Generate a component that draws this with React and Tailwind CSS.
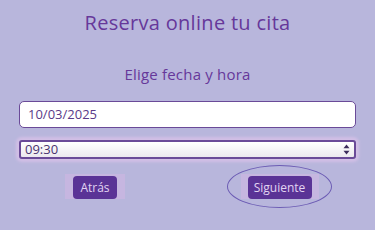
import React from 'react';

export default function App() {
  return (
    <div className="min-h-screen bg-[#b8b6dc] px-[19px] pt-[9px] font-['Open_Sans',sans-serif]">
      <h1 className="text-center text-[20px] leading-[28px] text-[#66389a] tracking-[0.3px]">
        Reserva online tu cita
      </h1>
      <h2 className="mt-[27px] text-center text-[15px] leading-[20px] text-[#66389a] tracking-[0.2px]">
        Elige fecha y hora
      </h2>

      {/* fecha */}
      <div className="mt-[17px] h-[27px] flex items-center rounded-[5px] border-[1.5px] border-[#6a4a98] bg-white px-[8px] text-[13px] text-[#5a3a88]">
        10/03/2025
      </div>

      {/* hora */}
      <div className="mt-[12px] h-[19px] flex items-center justify-between rounded-[3px] border-2 border-[#6a4a98] bg-gradient-to-b from-white to-[#ebe8ee] pl-[4px] pr-[4px] text-[13px] text-[#4a3470] shadow-[0_0_3px_3px_#d2bfe6]">
        <span className="leading-none">09:30</span>
        <svg width="7" height="11" viewBox="0 0 7 11">
          <path d="M3.5 0.5 L6.5 4.3 L0.5 4.3 Z" fill="#3c2c5c" />
          <path d="M3.5 10.5 L6.5 6.7 L0.5 6.7 Z" fill="#3c2c5c" />
        </svg>
      </div>

      {/* botones */}
      <div className="mt-[6px] flex items-center justify-between pl-[46px] pr-[24px]">
        <div className="px-[8px] bg-[#c6b6e0]">
          <button className="h-[23px] w-[44px] rounded-[4px] bg-[#5a3396] text-[12px] text-[#e2d4f2]">
            Atrás
          </button>
        </div>
        <div className="flex h-[43px] w-[105px] items-center justify-center rounded-[50%] border border-[#6c5cb4]">
          <div className="px-[7px] bg-[#c6b6e0]">
            <button className="h-[23px] w-[64px] rounded-[4px] bg-[#5a3396] text-[12px] text-[#e2d4f2]">
              Siguiente
            </button>
          </div>
        </div>
      </div>
    </div>
  );
}
